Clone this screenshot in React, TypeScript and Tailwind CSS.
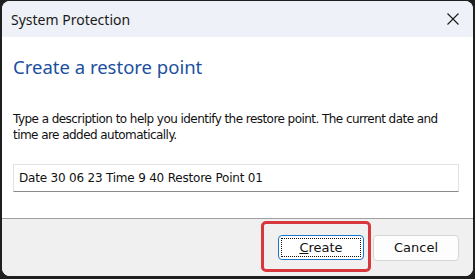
import React from 'react';

const App: React.FC = () => {
  return (
    <div className="w-[475px] h-[279px] bg-[#1f1f1f] pl-[2px] pr-[2px] pt-[1px] pb-[3px] overflow-hidden">
      <div className="h-full flex flex-col bg-white rounded-[8px] overflow-hidden">
        {/* Title bar */}
        <div className="h-[36px] shrink-0 bg-[#eef2f8] flex items-center justify-between pl-[9px] pr-[8px] font-['Noto_Sans',sans-serif] text-[14px] text-[#1a1a1a]">
          <span>System Protection</span>
          <svg width="14" height="14" viewBox="0 0 14 14" className="mr-[5px]">
            <path d="M1.5 1.5 L12.5 12.5 M12.5 1.5 L1.5 12.5" stroke="#1a1a1a" strokeWidth="1.1" />
          </svg>
        </div>

        {/* Content */}
        <div className="flex-1 flex flex-col px-[11px] pt-[17px] font-['DejaVu_Sans',sans-serif]">
          <h1 className="font-['Noto_Sans',sans-serif] text-[18.5px] leading-[26px] text-[#1c4f9f]">Create a restore point</h1>
          <p className="mt-[31px] text-[12px] leading-[16px] text-[#111] tracking-[-0.55px]">
            Type a description to help you identify the restore point. The current date and time are added automatically.
          </p>
          <div className="mt-[21px] mr-[3px] h-[28px] border border-[#e3e3e3] border-b-[#8a8a8a] flex items-center px-[5px] text-[12px] text-[#111] tracking-[-0.2px]">
            Date 30 06 23 Time 9 40 Restore Point 01
          </div>
        </div>

        {/* Footer */}
        <div className="h-[58px] shrink-0 bg-[#f0f0f0] border-t border-[#a0a0a0] flex items-center justify-end gap-[9px] pr-[14px] font-['DejaVu_Sans',sans-serif] text-[13px] text-[#111]">
          <div className="relative">
            <div className="absolute left-[-17px] top-[-14px] w-[110px] h-[51px] border-[3px] border-[#d7373d] rounded-[5px]" />
            <button className="w-[86px] h-[25px] bg-white border border-[#1a73c8] rounded-[4px] p-[2px]">
              <span className="w-full h-full flex items-center justify-center border border-dotted border-[#111]">
                <span><span className="underline">C</span>reate</span>
              </span>
            </button>
          </div>
          <button className="w-[86px] h-[26px] bg-[#fdfdfd] border border-[#d5d5d5] rounded-[4px]">Cancel</button>
        </div>
      </div>
    </div>
  );
};

export default App;
